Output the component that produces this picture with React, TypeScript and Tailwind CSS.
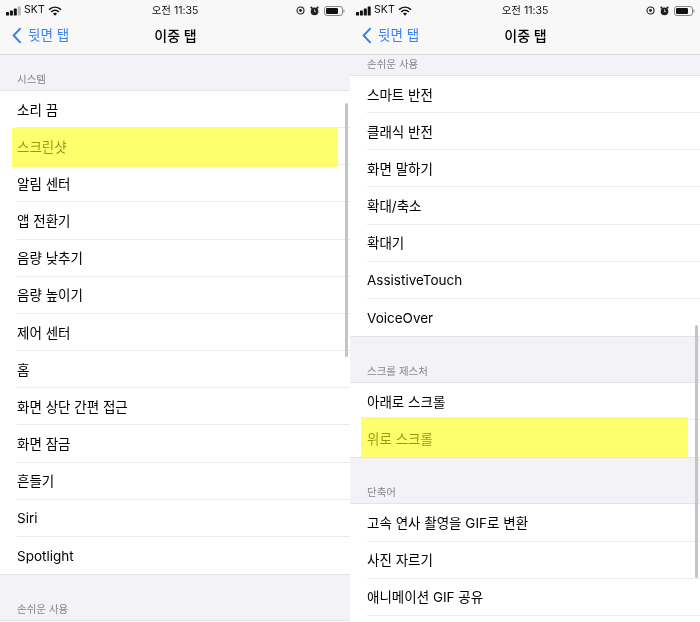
import React from "react";

const font = { fontFamily: 'Inter, "Noto Sans CJK KR", sans-serif' };

function StatusBar({ dim }: { dim?: boolean }) {
  return (
    <div className="grid h-[19px] grid-cols-[1fr_auto_1fr] items-center px-[5px] pt-[2px]">
      <div className="flex items-center">
        <svg width="16" height="10" viewBox="0 0 16 10" className="ml-[1px] mr-[2px]">
          <rect x="0" y="6" width="3" height="3.5" rx="0.6" fill="#111" />
          <rect x="3.9" y="4.4" width="3" height="5.1" rx="0.6" fill="#111" />
          <rect x="7.8" y="2.4" width="3" height="7.1" rx="0.6" fill="#111" />
          <rect x="11.7" y="0.4" width="3" height="9.1" rx="0.6" fill={dim ? "#b8b8b8" : "#111"} />
        </svg>
        <span className="text-[10.5px] leading-none tracking-[0.1px] text-[#111]">SKT</span>
        <svg width="14" height="10" viewBox="0 0 14 10" className="ml-[3px]">
          <path d="M1 3.6 C4.6 0.4 9.4 0.4 13 3.6" fill="none" stroke="#111" strokeWidth="1.6" />
          <path d="M3.2 5.8 C5.6 3.8 8.4 3.8 10.8 5.8" fill="none" stroke="#111" strokeWidth="1.6" />
          <path d="M5 7.6 L7 9.8 L9 7.6 C7.8 6.6 6.2 6.6 5 7.6 Z" fill="#111" />
        </svg>
      </div>
      <span className="text-[10.5px] leading-[14px] text-[#111]">오전 11:35</span>
      <div className="flex items-center justify-end gap-[5px]">
        <svg width="9" height="9" viewBox="0 0 9 9">
          <circle cx="4.5" cy="4.5" r="3.5" fill="none" stroke="#222" strokeWidth="1.1" />
          <circle cx="4.5" cy="4.5" r="1.4" fill="#222" />
        </svg>
        <svg width="9" height="10" viewBox="0 0 9 10">
          <circle cx="4.5" cy="5.4" r="3.8" fill="#222" />
          <circle cx="1.4" cy="1.6" r="1.1" fill="#222" />
          <circle cx="7.6" cy="1.6" r="1.1" fill="#222" />
          <path d="M4.5 3.4 V5.6 H6" stroke="#ddd" strokeWidth="0.8" fill="none" />
        </svg>
        <svg width="21" height="10" viewBox="0 0 21 10">
          <rect x="0.5" y="0.5" width="18" height="9" rx="2.5" fill="none" stroke="#888" />
          <rect x="2" y="2" width="12" height="6" rx="1.2" fill="#111" />
          <rect x="19.3" y="3.5" width="1.2" height="3" rx="0.6" fill="#999" />
        </svg>
      </div>
    </div>
  );
}

function NavBar() {
  return (
    <div className="grid h-[35px] grid-cols-[1fr_auto_1fr] items-center px-[12px] pb-[2px]">
      <div className="flex items-center">
        <svg width="10" height="17" viewBox="0 0 10 17">
          <path d="M8.6 1.2 L1.6 8.5 L8.6 15.8" fill="none" stroke="#2f7cf6" strokeWidth="1.9" />
        </svg>
        <span className="ml-[6px] text-[13.5px] leading-none text-[#3a82f6]">뒷면 탭</span>
      </div>
      <span className="ml-[1px] text-[14px] font-medium leading-[18px] text-[#000]">이중 탭</span>
      <span />
    </div>
  );
}

function Rows({ items }: { items: string[] }) {
  return (
    <div className="bg-white shadow-[0_-1px_0_#e4e4e8,0_1px_0_#e4e4e8]">
      {items.map((t, i) => (
        <div key={i} className="pl-[17px]">
          <div
            className={
              "flex h-[37.17px] items-center pt-[1.5px] text-[13.5px] text-[#000] " +
              (i < items.length - 1 ? "border-b border-[#ececee]" : "")
            }
          >
            {t}
          </div>
        </div>
      ))}
    </div>
  );
}

function Label({ text, className }: { text: string; className: string }) {
  return (
    <div className={"flex items-end pb-[4px] pl-[17px] text-[10.5px] leading-[14px] text-[#86868a] " + className}>
      {text}
    </div>
  );
}

function Phone({ children, dim }: { children: React.ReactNode; dim?: boolean }) {
  return (
    <div className="relative h-[622px] overflow-hidden bg-[#f2f2f7]">
      <div className="relative z-10 h-[55px] border-b border-[#dcdcde] bg-[#f8f8f8]">
        <StatusBar dim={dim} />
        <NavBar />
      </div>
      {children}
    </div>
  );
}

export default function App() {
  return (
    <div className="grid h-[622px] w-[700px] grid-cols-2 overflow-hidden blur-[0.35px]" style={font}>
      <Phone dim>
        <Label text="시스템" className="h-[36px]" />
        <Rows
          items={["소리 끔", "스크린샷", "알림 센터", "앱 전환기", "음량 낮추기", "음량 높이기", "제어 센터", "홈", "화면 상단 간편 접근", "화면 잠금", "흔들기", "Siri", "Spotlight"]}
        />
        <Label text="손쉬운 사용" className="h-[47px]" />
        <Rows items={[""]} />
        <div className="absolute left-[12px] top-[128px] h-[39px] w-[326px] bg-[#ffff0d]/60" />
        <div className="absolute left-[345px] top-[103px] h-[254px] w-[3px] rounded-full bg-[#c4c4c6]" />
      </Phone>
      <Phone>
        <Label text="손쉬운 사용" className="h-[21px]" />
        <Rows items={["스마트 반전", "클래식 반전", "화면 말하기", "확대/축소", "확대기", "AssistiveTouch", "VoiceOver"]} />
        <Label text="스크롤 제스처" className="h-[47px]" />
        <Rows items={["아래로 스크롤", "위로 스크롤"]} />
        <Label text="단축어" className="h-[47px]" />
        <Rows items={["고속 연사 촬영을 GIF로 변환", "사진 자르기", "애니메이션 GIF 공유", ""]} />
        <div className="absolute left-[11px] top-[417px] h-[40px] w-[327px] bg-[#ffff0d]/60" />
        <div className="absolute left-[345px] top-[325px] h-[253px] w-[3px] rounded-full bg-[#c4c4c6]" />
      </Phone>
    </div>
  );
}
